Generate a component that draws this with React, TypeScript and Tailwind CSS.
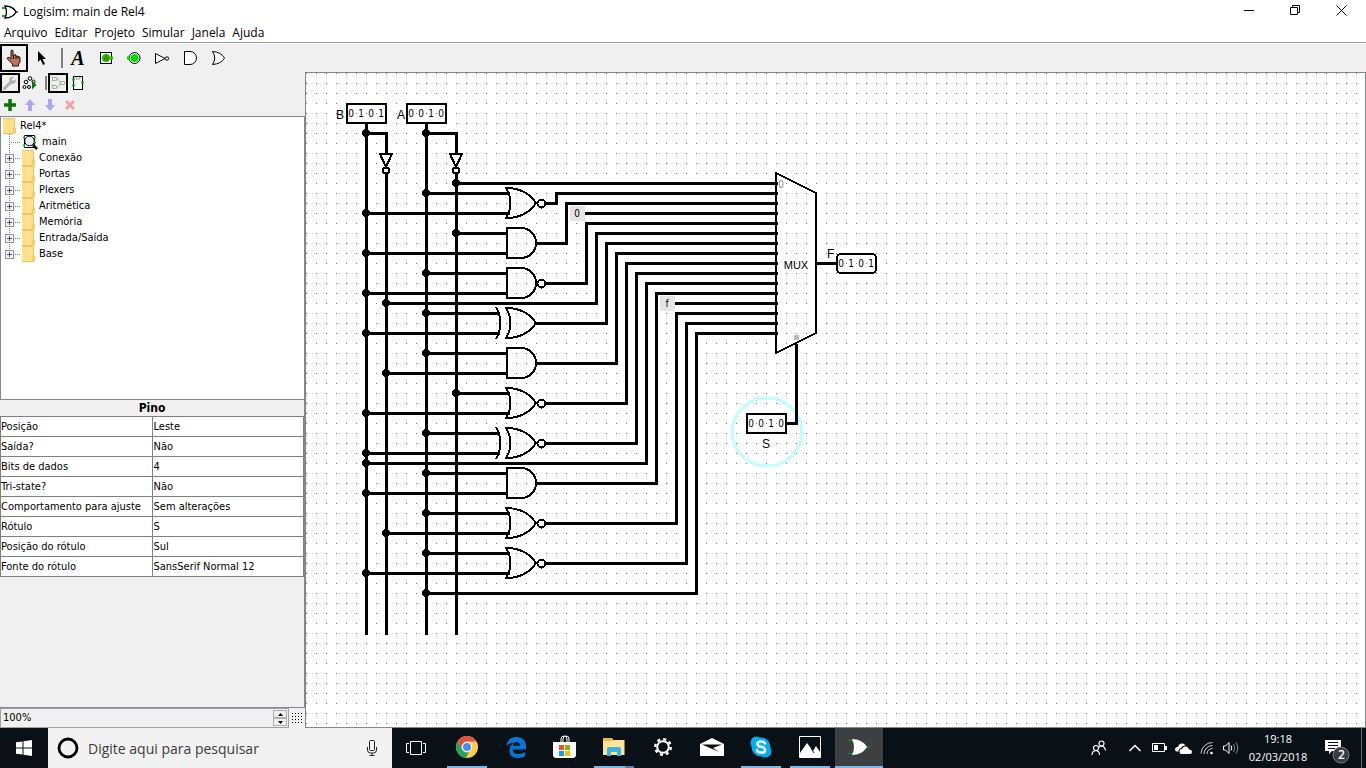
import React from "react";

const uiFont = "font-['DejaVu_Sans_Condensed','DejaVu_Sans',sans-serif]";
const shellFont = "font-['Open_Sans','Noto_Sans',sans-serif]";

/* ---------- Circuit ---------- */

type GateKind = "and" | "nand" | "or" | "nor" | "xor" | "xnor";

interface GateSpec {
  kind: GateKind;
  y: number;
  top: number;
  bottom: number;
  turn: number;
  target: number;
}

const gates: GateSpec[] = [
  { kind: "nor", y: 130, top: 120, bottom: 60, turn: 250, target: 120 },
  { kind: "and", y: 170, top: 150, bottom: 60, turn: 260, target: 130 },
  { kind: "nand", y: 210, top: 120, bottom: 60, turn: 280, target: 150 },
  { kind: "xor", y: 250, top: 120, bottom: 60, turn: 300, target: 170 },
  { kind: "and", y: 290, top: 120, bottom: 80, turn: 310, target: 180 },
  { kind: "nor", y: 330, top: 150, bottom: 60, turn: 320, target: 190 },
  { kind: "xnor", y: 370, top: 120, bottom: 60, turn: 330, target: 200 },
  { kind: "and", y: 410, top: 120, bottom: 60, turn: 350, target: 220 },
  { kind: "nor", y: 450, top: 120, bottom: 80, turn: 370, target: 240 },
  { kind: "nor", y: 490, top: 120, bottom: 60, turn: 380, target: 250 },
];

const MUX_X = 470;

const plainWires = [
  "M60 50V560",
  "M60 60H80V80M80 101V560",
  "M120 50V560",
  "M120 60H150V80M150 101V560",
  "M150 110H470",
  "M280 140H470",
  "M80 230H290V160H470",
  "M60 390H340V210H470",
  "M370 230H470",
  "M120 520H390V260H470",
  "M510 190H530",
  "M480 350H490V272",
];

const plainJunctions: [number, number][] = [
  [60, 60],
  [120, 60],
  [150, 110],
  [80, 230],
  [60, 390],
  [120, 520],
];

function GateWires({ g }: { g: GateSpec }) {
  const isX = g.kind === "xor" || g.kind === "xnor";
  const isAnd = g.kind === "and" || g.kind === "nand";
  const inverted = g.kind === "nand" || g.kind === "nor" || g.kind === "xnor";
  const end = isX ? 192 : isAnd ? 200 : 202;
  const out = inverted ? 241 : 231;
  return (
    <>
      <path d={`M${g.top} ${g.y - 10}H${end}M${g.bottom} ${g.y + 10}H${end}`} />
      <path d={`M${out} ${g.y}H${g.turn}V${g.target}H${MUX_X}`} />
    </>
  );
}

function GateBody({ g }: { g: GateSpec }) {
  const isX = g.kind === "xor" || g.kind === "xnor";
  const isAnd = g.kind === "and" || g.kind === "nand";
  const inverted = g.kind === "nand" || g.kind === "nor" || g.kind === "xnor";
  const { y } = g;
  return (
    <>
      {isAnd ? (
        <path d={`M201 ${y - 15}H215A15 15 0 0 1 215 ${y + 15}H201Z`} />
      ) : (
        <path
          d={`M230 ${y}Q220 ${y - 15} 200 ${y - 15}Q209 ${y} 200 ${y + 15}Q220 ${y + 15} 230 ${y}Z`}
        />
      )}
      {isX && <path d={`M190 ${y - 16}Q199 ${y} 190 ${y + 16}`} />}
      {inverted && <circle cx={235.5} cy={y + 0.5} r={4} />}
    </>
  );
}

function Digits({ x, y, bits }: { x: number; y: number; bits: string }) {
  return (
    <>
      {bits.split("").map((b, i) => (
        <text key={i} x={x + 5 + i * 10} y={y + 14} textAnchor="middle">
          {b}
        </text>
      ))}
    </>
  );
}

function Circuit() {
  return (
    <svg className="block size-full" role="img" aria-label="Circuito main">
      <defs>
        <pattern id="grid" width="10" height="10" patternUnits="userSpaceOnUse">
          <rect width="1" height="1" fill="#777777" />
        </pattern>
      </defs>
      <rect width="100%" height="100%" fill="url(#grid)" shapeRendering="crispEdges" />
      <g shapeRendering="crispEdges">
        <rect x="264" y="133" width="15" height="15" fill="#e5e5e5" />
        <rect x="354" y="223" width="15" height="15" fill="#e5e5e5" />
        <ellipse cx="461" cy="359" rx="35" ry="34" fill="none" stroke="#bfffff" strokeWidth="3" />
        <g transform="translate(0.5 0.5)" fill="none" stroke="#000" strokeWidth="3" strokeLinecap="square">
          {plainWires.map((d) => (
            <path key={d} d={d} />
          ))}
          {gates.map((g) => (
            <GateWires key={g.y} g={g} />
          ))}
          {Array.from({ length: 16 }, (_, i) => (
            <path key={i} d={`M465 ${110 + i * 10}H470`} />
          ))}
        </g>
        <g>
          {plainJunctions.map(([x, y]) => (
            <circle key={`${x}-${y}`} cx={x} cy={y} r="3.8" />
          ))}
          {gates.map((g) => (
            <React.Fragment key={g.y}>
              <circle cx={g.top} cy={g.y - 10} r="3.8" />
              <circle cx={g.bottom} cy={g.y + 10} r="3.8" />
            </React.Fragment>
          ))}
        </g>
        <g fill="none" stroke="#000" strokeWidth="2">
          {gates.map((g) => (
            <GateBody key={g.y} g={g} />
          ))}
          {[80, 150].map((x) => (
            <React.Fragment key={x}>
              <path d={`M${x - 6} 81H${x + 6}L${x} 94Z`} fill="#fff" />
              <circle cx={x} cy="97.5" r="3" fill="#fff" />
            </React.Fragment>
          ))}
          <rect x="41" y="31" width="39" height="19" />
          <rect x="101" y="31" width="39" height="19" />
          <rect x="441" y="341" width="39" height="19" />
          <rect x="531" y="181" width="39" height="19" rx="4" />
          <path d="M470 100L510 120V260L470 280Z" />
        </g>
        <rect x="488" y="262" width="5" height="5" fill="#bbbbbb" />
      </g>
      <g className="font-['DejaVu_Sans_Condensed','DejaVu_Sans',sans-serif] text-[10px]">
        <Digits x={40} y={30} bits="0101" />
        <Digits x={100} y={30} bits="0010" />
        <Digits x={440} y={340} bits="0010" />
        <Digits x={530} y={180} bits="0101" />
        <text x="271" y="144" textAnchor="middle">0</text>
        <text x="361" y="234" textAnchor="middle">f</text>
        <text x="475" y="115" textAnchor="middle" fill="#888888">0</text>
      </g>
      <g className="font-['Liberation_Sans',sans-serif] text-[12px]">
        <text x="30" y="46">B</text>
        <text x="91" y="46">A</text>
        <text x="521" y="185">F</text>
        <text x="460" y="375" textAnchor="middle">S</text>
        <text x="490" y="196" textAnchor="middle" className="text-[11px]">MUX</text>
      </g>
    </svg>
  );
}

/* ---------- Tool icons ---------- */

function LogisimLogo() {
  return (
    <svg width="18" height="16" viewBox="0 0 18 16" aria-hidden="true">
      <path d="M1 4h4M1 12h4M14 8h3" stroke="#00c000" strokeWidth="2" />
      <path d="M4 2Q12 2 15 8Q12 14 4 14Q7 8 4 2Z" fill="#fff" stroke="#000" strokeWidth="1.3" />
    </svg>
  );
}

function HandIcon() {
  return (
    <svg width="16" height="18" viewBox="0 0 16 18" className="shrink-0" aria-hidden="true">
      <path
        d="M5 1.5q1.5-1 2 0V7h1V6q1.3-.8 2 0v1.500q1-1 2 0V8q1.200-.8 2 .2V13l-1.500 2v2H6.500v-2L1 9.500Q1.500 7.500 3.500 8.500L5 10Z"
        fill="#bf7256"
        stroke="#20120c"
      />
      <path d="M7.500 7v3M10 7.500V10M12 8v2" stroke="#20120c" />
    </svg>
  );
}

function PointerIcon() {
  return (
    <svg width="12" height="16" viewBox="0 0 12 16" aria-hidden="true">
      <path d="M2 1v11l2.500-2.500L7 15l2-1-2.500-5H10Z" fill="#000" />
    </svg>
  );
}

function InputPinIcon() {
  return (
    <svg width="16" height="16" viewBox="0 0 16 16" aria-hidden="true">
      <rect x="2.500" y="2.500" width="11" height="11" fill="#fff" stroke="#000" />
      <circle cx="8" cy="8" r="4" fill="#00d000" />
      <path d="M12 8h3" stroke="#00d000" strokeWidth="3" />
      <path d="M9 5v6M9 5L6 9h5" stroke="#b04000" fill="none" />
    </svg>
  );
}

function OutputPinIcon() {
  return (
    <svg width="16" height="16" viewBox="0 0 16 16" aria-hidden="true">
      <circle cx="8.500" cy="8" r="5.500" fill="#fff" stroke="#000" />
      <circle cx="8.500" cy="8" r="4" fill="#00d800" />
      <path d="M1 8h3" stroke="#00d800" strokeWidth="3" />
    </svg>
  );
}

function NotIcon() {
  return (
    <svg width="16" height="16" viewBox="0 0 16 16" fill="#fff" stroke="#000" aria-hidden="true">
      <path d="M1.500 3.500v10L11 8.500Z" />
      <circle cx="13" cy="8.500" r="1.700" />
    </svg>
  );
}

function AndIcon() {
  return (
    <svg width="16" height="16" viewBox="0 0 16 16" fill="#fff" stroke="#000" aria-hidden="true">
      <path d="M2.500 1.500H8a6 6 0 0 1 0 13H2.500Z" />
    </svg>
  );
}

function OrIcon() {
  return (
    <svg width="16" height="16" viewBox="0 0 16 16" fill="#fff" stroke="#000" aria-hidden="true">
      <path d="M2.500 1.500Q11 2 14.500 8Q11 14 2.500 14.500Q7 8 2.500 1.500Z" />
    </svg>
  );
}

function WrenchIcon() {
  return (
    <svg width="14" height="14" viewBox="0 0 14 14" aria-hidden="true">
      <path d="M1.500 12.500L8 6" stroke="#b0b0b0" strokeWidth="3" strokeLinecap="round" />
      <path d="M12.500 3L10 5 8.500 3.500 11 1Q7 0 6 3.500 6.500 8 10 8 13.500 7 12.500 3Z" fill="#b0b0b0" />
    </svg>
  );
}

function SimTreeIcon() {
  return (
    <svg width="16" height="16" viewBox="0 0 16 16" className="shrink-0" fill="none" stroke="#000" aria-hidden="true">
      <circle cx="8" cy="3.500" r="1.800" />
      <circle cx="4" cy="7" r="1.800" />
      <circle cx="11.500" cy="6.500" r="1.500" />
      <circle cx="2.500" cy="12" r="1.500" />
      <circle cx="7" cy="12" r="1.500" />
      <path d="M10 5.500v9l4.500-4.500Z" fill="#007a00" stroke="none" />
    </svg>
  );
}

function LayoutIcon() {
  return (
    <svg width="14" height="14" viewBox="0 0 14 14" fill="none" aria-hidden="true">
      <path d="M5 3h3v3h2M5 11h3V8h2M0 1h2M0 5h2M0 9h2" stroke="#9be09b" />
      <path d="M1.500 1.500h4v3h-4zM1.500 9.500h4v3h-4zM9.500 5.500h4v3h-4z" stroke="#aaaaaa" />
    </svg>
  );
}

function AppearanceIcon() {
  return (
    <svg width="14" height="16" viewBox="0 0 14 16" fill="none" aria-hidden="true">
      <rect x="2.500" y="1.500" width="9" height="13" fill="#fff" stroke="#000" />
      <path d="M5 2v2h4V2" stroke="#999" />
      <path d="M1 4.500h3M1 10.500h3M10 7.500h3" stroke="#00d000" strokeWidth="2" />
    </svg>
  );
}

function PlusIcon() {
  return (
    <svg width="12" height="12" viewBox="0 0 12 12" aria-hidden="true">
      <path d="M6 0v12M0 6h12" stroke="#067506" strokeWidth="3.500" />
    </svg>
  );
}

function ArrowIcon({ down = false }: { down?: boolean }) {
  return (
    <svg width="10" height="12" viewBox="0 0 10 12" aria-hidden="true">
      <path
        d={down ? "M3 0h4v6h3L5 12 0 6h3Z" : "M5 0l5 6H7v6H3V6H0Z"}
        fill="#a8a8ee"
      />
    </svg>
  );
}

function CrossIcon() {
  return (
    <svg width="12" height="12" viewBox="0 0 12 12" aria-hidden="true">
      <path d="M2 2l8 8M10 2l-8 8" stroke="#f0a4a4" strokeWidth="3" />
    </svg>
  );
}

function FolderIcon() {
  return (
    <svg width="13" height="16" viewBox="0 0 13 16" aria-hidden="true">
      <path d="M0 0h10l2 1v9l1 1v4l-2 1H0Z" fill="#ffe08c" />
      <path d="M0 .5h11.500V10M10.500 15V10.500h2V15l-2 .5H0" fill="none" stroke="#eec75c" />
    </svg>
  );
}

function MainCircuitIcon() {
  return (
    <svg width="16" height="16" viewBox="0 0 16 16" fill="none" aria-hidden="true">
      <path d="M2.500 1.500h10v12h-10z" fill="#fff" stroke="#000" />
      <circle cx="7.500" cy="7" r="4.800" fill="#eeeeff" stroke="#000" />
      <path d="M11 11l4 4" stroke="#000" strokeWidth="2.500" />
      <path d="M1 3.500h2M1 11.500h2M12 3.500h2M12 8.500h2" stroke="#00d000" strokeWidth="2" />
    </svg>
  );
}

interface Tool {
  label: string;
  icon: React.ReactNode;
  active?: boolean;
}

const mainTools: Tool[] = [
  { label: "Alterar valores", icon: <HandIcon />, active: true },
  { label: "Editar seleção", icon: <PointerIcon /> },
];

const insertTools: Tool[] = [
  {
    label: "Texto",
    icon: <span className="font-['Liberation_Serif',serif] text-[20px] leading-5 font-bold italic">A</span>,
  },
  { label: "Pino de entrada", icon: <InputPinIcon /> },
  { label: "Pino de saída", icon: <OutputPinIcon /> },
  { label: "Porta NOT", icon: <NotIcon /> },
  { label: "Porta AND", icon: <AndIcon /> },
  { label: "Porta OR", icon: <OrIcon /> },
];

function ToolButton({ tool, small = false }: { tool: Tool; small?: boolean }) {
  return (
    <button
      type="button"
      aria-label={tool.label}
      className={`flex items-center justify-center border-2 ${small ? "size-5" : "size-7"} ${
        tool.active ? "border-black" : "border-transparent"
      }`}
    >
      {tool.icon}
    </button>
  );
}

/* ---------- Explorer and attributes ---------- */

const libraries = ["Conexão", "Portas", "Plexers", "Aritmética", "Memória", "Entrada/Saída", "Base"];

const attributes: [string, string][] = [
  ["Posição", "Leste"],
  ["Saída?", "Não"],
  ["Bits de dados", "4"],
  ["Tri-state?", "Não"],
  ["Comportamento para ajuste", "Sem alterações"],
  ["Rótulo", "S"],
  ["Posição do rótulo", "Sul"],
  ["Fonte do rótulo", "SansSerif Normal 12"],
];

function TreeBranch({ expandable, last }: { expandable: boolean; last: boolean }) {
  return (
    <svg width="21" height="16" viewBox="0 0 21 16" className="shrink-0" aria-hidden="true" shapeRendering="crispEdges">
      <path d={last ? "M8.500 0V8" : "M8.500 0V16"} stroke="#808080" strokeDasharray="1 1" />
      <path d="M10 8.500H20" stroke="#808080" strokeDasharray="1 1" />
      {expandable && (
        <>
          <rect x="4.500" y="4.500" width="8" height="8" fill="#f4f4f4" stroke="#919191" />
          <path d="M6 8.500h5M8.500 6v5" stroke="#3a539b" />
        </>
      )}
    </svg>
  );
}

function Explorer() {
  return (
    <div className="min-h-0 flex-1 overflow-hidden border border-[#828790] bg-white pt-px">
      <button type="button" className="flex h-4 items-center gap-1 pl-0.5">
        <FolderIcon />
        Rel4*
      </button>
      <ul>
        <li>
          <button type="button" className="flex h-4 items-center">
            <TreeBranch expandable={false} last={false} />
            <MainCircuitIcon />
            <span className="pl-1">main</span>
          </button>
        </li>
        {libraries.map((name, i) => (
          <li key={name}>
            <button type="button" className="flex h-4 items-center">
              <TreeBranch expandable last={i === libraries.length - 1} />
              <FolderIcon />
              <span className="pl-1">{name}</span>
            </button>
          </li>
        ))}
      </ul>
    </div>
  );
}

function Attributes() {
  return (
    <div className="h-[308px] shrink-0 border-r border-b border-[#828790]">
      <table className="w-full table-fixed border-collapse bg-white">
        <caption className="h-4 bg-[#f0f0f0] text-center text-[12px] leading-4 font-bold">Pino</caption>
        <tbody>
          {attributes.map(([name, value]) => (
            <tr key={name} className="h-5">
              <th scope="row" className="border border-[#808080] p-0 text-left font-normal whitespace-nowrap">
                {name}
              </th>
              <td className="border border-[#808080] p-0 pl-px whitespace-nowrap">{value}</td>
            </tr>
          ))}
        </tbody>
      </table>
    </div>
  );
}

function ZoomBar() {
  return (
    <div className="flex h-5 shrink-0 items-stretch">
      <div className="flex flex-1 items-stretch border border-[#a0a0a8] bg-[#f0f0f0] p-px">
        <input aria-label="Zoom" defaultValue="100%" className="w-0 flex-1 bg-transparent pl-px outline-none" />
        <div className="flex w-[14px] flex-col">
          <button type="button" aria-label="Aumentar" className="flex flex-1 items-center justify-center border border-[#b0b0b0] bg-[#f0f0f0]">
            <svg width="5" height="3" viewBox="0 0 5 3" aria-hidden="true"><path d="M0 3h5L2.500 0Z" /></svg>
          </button>
          <button type="button" aria-label="Diminuir" className="flex flex-1 items-center justify-center border border-[#b0b0b0] bg-[#f0f0f0]">
            <svg width="5" height="3" viewBox="0 0 5 3" aria-hidden="true"><path d="M0 0h5L2.500 3Z" /></svg>
          </button>
        </div>
      </div>
      <button type="button" aria-label="Mostrar grade" className="flex w-4 items-center justify-center">
        <svg width="10" height="10" viewBox="0 0 10 10" aria-hidden="true" shapeRendering="crispEdges">
          {[0, 3, 6, 9].map((y) => (
            <path key={y} d={`M0 ${y}.5H10`} stroke="#000" strokeDasharray="1 2" />
          ))}
        </svg>
      </button>
    </div>
  );
}

/* ---------- Taskbar ---------- */

function ChromeIcon() {
  return (
    <svg width="22" height="22" viewBox="0 0 22 22" aria-hidden="true">
      <circle cx="11" cy="11" r="11" fill="#ffcd46" />
      <path d="M1.500 5.500A11 11 0 0 1 20.500 5.500H11A5.500 5.500 0 0 0 6.200 13.700Z" fill="#de5246" />
      <path d="M1.500 5.500L6.200 13.700A5.500 5.500 0 0 0 13 16L10 22A11 11 0 0 1 1.500 5.500Z" fill="#1da362" />
      <circle cx="11" cy="11" r="5" fill="#fff" />
      <circle cx="11" cy="11" r="4" fill="#4c8bf5" />
    </svg>
  );
}

function EdgeIcon() {
  return (
    <svg width="20" height="21" viewBox="0 0 20 21" aria-hidden="true">
      <path
        d="M0 9Q2 0 10.500 0Q20 0 20 10v2.500H6.500Q7 17 12.500 17 16 17 19 15.200V19.300Q16 21 12 21 3.500 21 3.500 13.500 3.500 8.500 8 5.800 3 6 0 9ZM6.700 8.800H14Q14 5 10.500 5 7.500 5.200 6.700 8.800Z"
        fill="#0078d7"
        fillRule="evenodd"
      />
    </svg>
  );
}

function StoreIcon() {
  return (
    <svg width="24" height="24" viewBox="0 0 24 24" aria-hidden="true">
      <path d="M8 8V4q0-3 3-3t3 3v4M10 8V4q0-3 3-3t3 3v4" fill="none" stroke="#fff" strokeWidth="1" />
      <path d="M0 7h23v14l-2 2H2l-2-2Z" fill="#fff" />
      <path d="M6 10h5v5H6z" fill="#f25022" />
      <path d="M12 10h5v5h-5z" fill="#7fba00" />
      <path d="M6 16h5v5H6z" fill="#00a4ef" />
      <path d="M12 16h5v5h-5z" fill="#ffb900" />
    </svg>
  );
}

function ExplorerIcon() {
  return (
    <svg width="22" height="20" viewBox="0 0 22 20" aria-hidden="true">
      <path d="M0 1h9l1 2h11.500v15H0Z" fill="#ffe593" />
      <path d="M0 1h9l1 2-1 1H0Z" fill="#efba3f" />
      <path d="M4 19v-7q0-2 2-2h10q2 0 2 2v7h-4v-4H8v4Z" fill="#3db2e8" />
    </svg>
  );
}

function GearIcon() {
  return (
    <svg width="20" height="20" viewBox="0 0 20 20" fill="none" stroke="#fff" aria-hidden="true">
      <circle cx="10" cy="10" r="5.800" strokeWidth="2" />
      <circle cx="10" cy="10" r="7.800" strokeWidth="2.400" strokeDasharray="3.060 3.060" />
    </svg>
  );
}

function MailIcon() {
  return (
    <svg width="24" height="20" viewBox="0 0 24 20" aria-hidden="true">
      <path d="M0 7L12 1l12 6v12H0Z" fill="#fff" />
      <path d="M2 7.500h20l-9 3.500 6 4L2 7.500Z" fill="#0b1013" />
    </svg>
  );
}

function SkypeIcon() {
  return (
    <svg width="22" height="22" viewBox="0 0 22 22" aria-hidden="true">
      <circle cx="11" cy="11" r="9.500" fill="#00aff0" />
      <circle cx="6.500" cy="6.500" r="6" fill="#00aff0" />
      <circle cx="15.500" cy="15.500" r="6" fill="#00aff0" />
      <path d="M15 7.500Q14 5.500 11 5.500 7.500 5.500 7.500 8T11 10.800 15 14 11 16.500 7 14" fill="none" stroke="#fff" strokeWidth="2.500" strokeLinecap="round" />
    </svg>
  );
}

function PhotosIcon() {
  return (
    <svg width="22" height="22" viewBox="0 0 22 22" aria-hidden="true">
      <path d="M.5.500h21v21H.500Z" fill="none" stroke="#fff" />
      <path d="M1 17L8 7l6 8 3-5 4 6v5H1Z" fill="#fff" />
      <path d="M12 12l3 5" stroke="#0b1013" />
    </svg>
  );
}

function LogisimTaskIcon() {
  return (
    <svg width="24" height="20" viewBox="0 0 24 20" aria-hidden="true">
      <path d="M1 3.500h5M1 16.500h5M19 10h4" stroke="#00a000" />
      <path d="M5 2Q15 2 20 10 15 18 5 18 9 10 5 2Z" fill="#fff" />
    </svg>
  );
}

interface TaskApp {
  name: string;
  icon: React.ReactNode;
  mark?: "open" | "stacked" | "active";
}

const taskApps: TaskApp[] = [
  { name: "Google Chrome", icon: <ChromeIcon />, mark: "open" },
  { name: "Microsoft Edge", icon: <EdgeIcon /> },
  { name: "Microsoft Store", icon: <StoreIcon /> },
  { name: "Explorador de Arquivos", icon: <ExplorerIcon />, mark: "stacked" },
  { name: "Configurações", icon: <GearIcon /> },
  { name: "Email", icon: <MailIcon /> },
  { name: "Skype", icon: <SkypeIcon />, mark: "open" },
  { name: "Fotos", icon: <PhotosIcon />, mark: "open" },
  { name: "Logisim", icon: <LogisimTaskIcon />, mark: "active" },
];

function TaskButton({ app }: { app: TaskApp }) {
  return (
    <button
      type="button"
      aria-label={app.name}
      className={`flex w-12 flex-col items-center ${app.mark === "active" ? "bg-[#3d4043]" : ""}`}
    >
      <span className="flex flex-1 items-center justify-center">{app.icon}</span>
      <span className={`flex h-0.5 ${app.mark === "active" ? "w-12" : "w-10"}`}>
        {app.mark && <span className="flex-1 bg-[#76b9ed]" />}
        {app.mark === "stacked" && <span className="w-[9px] bg-[#4f83ad]" />}
      </span>
    </button>
  );
}

const trayIcons: { name: string; icon: React.ReactNode }[] = [
  {
    name: "Mostrar ícones ocultos",
    icon: <svg width="12" height="8" viewBox="0 0 12 8" fill="none" stroke="#fff" strokeWidth="1.500"><path d="M.5 7L6 1.500 11.500 7" /></svg>,
  },
  {
    name: "Bateria",
    icon: (
      <svg width="15" height="10" viewBox="0 0 15 10" fill="none" stroke="#fff">
        <path d="M.5.500h12v8H.500Z" />
        <path d="M14 3v4" strokeWidth="2" />
        <path d="M2 2h4v5H2Z" fill="#fff" stroke="none" />
      </svg>
    ),
  },
  {
    name: "OneDrive",
    icon: (
      <svg width="17" height="11" viewBox="0 0 17 11" fill="#fff">
        <path d="M0 6.500Q0 4 3 4 3.500 1 6.500.500 9 0 10.500 2.500 7 2 6 5 3.500 5.500 3.500 8.500H1.500Q0 8 0 6.500Z" />
        <path d="M4.500 8.500Q4.500 6 7 6 8 3 11 3.500 13.500 4 14 6.500 17 6.500 17 9 17 11 15 11H6.500Q4.500 11 4.500 8.500Z" />
      </svg>
    ),
  },
  {
    name: "Rede",
    icon: (
      <svg width="14" height="14" viewBox="0 0 14 14" fill="none" stroke="#fff">
        <path d="M1 12.500A11.500 11.500 0 0 1 12.500 1.500M4 13A8.500 8.500 0 0 1 12.500 4.500M7 13A5.500 5.500 0 0 1 12.500 7.500" opacity=".8" />
        <circle cx="11.500" cy="12" r="1.300" fill="#fff" stroke="none" />
      </svg>
    ),
  },
  {
    name: "Volume",
    icon: (
      <svg width="16" height="14" viewBox="0 0 16 14" fill="none" stroke="#fff">
        <path d="M.5 5h2L6 1.500v11L2.500 9h-2Z" />
        <path d="M8 4.500q1.500 2.500 0 5" />
        <path d="M10.500 3q2.500 4 0 8M13 1.500q3.500 5.500 0 11" opacity=".5" />
      </svg>
    ),
  },
];

function Taskbar() {
  return (
    <footer className={`flex h-10 shrink-0 items-stretch bg-[#091016] text-white ${shellFont}`}>
      <button type="button" aria-label="Iniciar" className="flex w-12 items-center justify-center">
        <svg width="16" height="16" viewBox="0 0 16 16" fill="#fff" aria-hidden="true">
          <path d="M0 2.300L6.500 1.400V7.500H0ZM7.500 1.200L16 0v7.500H7.500ZM0 8.500h6.500v6.100L0 13.700ZM7.500 8.500H16V16L7.500 14.800Z" />
        </svg>
      </button>
      <div className="flex w-[344px] items-center bg-[#f1f1f1] pr-3 pl-[9px] text-black">
        <svg width="22" height="22" viewBox="0 0 22 22" aria-hidden="true">
          <circle cx="11" cy="11" r="9" fill="none" stroke="#000" strokeWidth="2.800" />
        </svg>
        <input
          aria-label="Pesquisar"
          placeholder="Digite aqui para pesquisar"
          className="h-full min-w-0 flex-1 bg-transparent pl-[9px] text-[14px] outline-none placeholder:text-[#3c3c3c]"
        />
        <button type="button" aria-label="Pesquisa por voz" className="flex w-4 justify-center">
          <svg width="12" height="18" viewBox="0 0 12 18" fill="none" stroke="#222" aria-hidden="true">
            <rect x="3.500" y="1.500" width="5" height="10" rx="1" />
            <path d="M1.500 8v3q0 3 3 3h3q3 0 3-3V8M6 14v2.500M3.500 16.500h5" />
          </svg>
        </button>
      </div>
      <button type="button" aria-label="Visão de tarefas" className="flex w-12 items-center justify-center">
        <svg width="20" height="14" viewBox="0 0 20 14" fill="none" stroke="#fff" aria-hidden="true">
          <path d="M4.500.500h11v13h-11ZM3 2.500H.500v9H3M17 2.500h2.500v9H17" />
        </svg>
      </button>
      <div className="ml-[3px] flex gap-px">
        {taskApps.map((app) => (
          <TaskButton key={app.name} app={app} />
        ))}
      </div>
      <div className="ml-auto flex items-stretch">
        <button type="button" aria-label="Pessoas" className="flex w-12 items-center justify-center">
          <svg width="16" height="16" viewBox="0 0 16 16" fill="none" stroke="#fff" strokeWidth="1.200" aria-hidden="true">
            <circle cx="10.500" cy="3.500" r="2.500" />
            <circle cx="5" cy="8" r="2.500" />
            <path d="M1 15q0-4 4-4.500 3.500.5 3.500 4.500M8 7.500q1-1.500 2.500-1.500 3.500.5 4 4.500" />
          </svg>
        </button>
        {trayIcons.map((t) => (
          <button key={t.name} type="button" aria-label={t.name} className="flex w-6 items-center justify-center">
            {t.icon}
          </button>
        ))}
        <button type="button" className="flex w-[70px] flex-col items-center justify-center text-[11px] leading-[18px]">
          <span>19:18</span>
          <span>02/03/2018</span>
        </button>
        <button type="button" aria-label="Notificações" className="relative flex w-12 items-center justify-center">
          <svg width="26" height="32" viewBox="0 0 26 32" aria-hidden="true">
            <path d="M1 8h16v11H8l-3 3v-3H1Z" fill="#fff" />
            <path d="M4 10.500h10M4 13.500h10M4 16.500h7" stroke="#091016" />
            <circle cx="17" cy="23" r="8" fill="#3b3e41" stroke="#77797b" />
          </svg>
          <span className="absolute top-[19px] left-[25px] text-[12px] leading-4 font-semibold">2</span>
        </button>
        <div className="w-[5px] border-l border-[#6a6e72]" />
      </div>
    </footer>
  );
}

/* ---------- Window ---------- */

const menus = ["Arquivo", "Editar", "Projeto", "Simular", "Janela", "Ajuda"];

export default function App() {
  return (
    <div className="flex h-screen flex-col overflow-hidden bg-[#f0f0f0] text-black">
      <header className={`shrink-0 border-b border-[#a0a0a0] bg-white text-[12px] ${shellFont}`}>
        <div className="flex h-6 items-start pr-0.5">
          <h1 className="flex h-6 flex-1 items-center gap-1 pl-px font-normal">
            <LogisimLogo />
            Logisim: main de Rel4
          </h1>
          <button type="button" aria-label="Minimizar" className="flex h-5 w-[46px] items-center justify-center">
            <svg width="10" height="10" viewBox="0 0 10 10" stroke="#000"><path d="M0 5.500h10" /></svg>
          </button>
          <button type="button" aria-label="Restaurar" className="flex h-5 w-[46px] items-center justify-center">
            <svg width="10" height="10" viewBox="0 0 10 10" fill="none" stroke="#000"><path d="M.5 2.500h7v7h-7ZM2.500 2V.500h7v7H8" /></svg>
          </button>
          <button type="button" aria-label="Fechar" className="flex h-5 w-[46px] items-center justify-center">
            <svg width="11" height="11" viewBox="0 0 11 11" stroke="#000"><path d="M.5.500l10 10M10.500.500l-10 10" /></svg>
          </button>
        </div>
        <nav className="flex h-[18px] items-center gap-[7px] pl-1">
          {menus.map((m) => (
            <button key={m} type="button">
              {m}
            </button>
          ))}
        </nav>
      </header>

      <div role="toolbar" aria-label="Ferramentas" className="flex h-[29px] shrink-0 items-center border-t border-white">
        {mainTools.map((t) => (
          <ToolButton key={t.label} tool={t} />
        ))}
        <span className="mr-px ml-[5px] h-5 w-0.5 bg-[#808080]" />
        {insertTools.map((t) => (
          <ToolButton key={t.label} tool={t} />
        ))}
      </div>

      <div className={`flex min-h-0 flex-1 text-[11px] leading-4 ${uiFont}`}>
        <aside className="flex w-[305px] shrink-0 flex-col">
          <div className="flex h-[22px] shrink-0 items-center">
            <ToolButton small tool={{ label: "Caixa de ferramentas", icon: <WrenchIcon />, active: true }} />
            <ToolButton small tool={{ label: "Árvore de simulação", icon: <SimTreeIcon /> }} />
            <span className="mr-px ml-[5px] h-[14px] w-0.5 bg-[#808080]" />
            <ToolButton small tool={{ label: "Editar leiaute", icon: <LayoutIcon />, active: true }} />
            <ToolButton small tool={{ label: "Editar aparência", icon: <AppearanceIcon /> }} />
          </div>
          <div className="flex h-[22px] shrink-0 items-center">
            <ToolButton small tool={{ label: "Adicionar circuito", icon: <PlusIcon /> }} />
            <ToolButton small tool={{ label: "Mover para cima", icon: <ArrowIcon /> }} />
            <ToolButton small tool={{ label: "Mover para baixo", icon: <ArrowIcon down /> }} />
            <ToolButton small tool={{ label: "Remover circuito", icon: <CrossIcon /> }} />
          </div>
          <Explorer />
          <Attributes />
          <ZoomBar />
        </aside>
        <main className="min-w-0 flex-1 overflow-hidden border border-[#828790] bg-white">
          <Circuit />
        </main>
      </div>
      <Taskbar />
    </div>
  );
}
